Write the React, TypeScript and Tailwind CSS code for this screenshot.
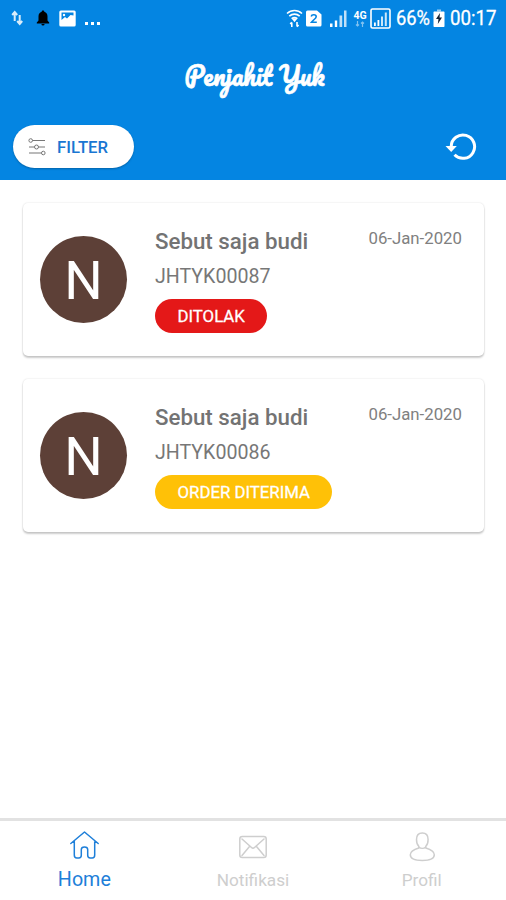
import type { ReactNode } from "react";
import { clsx } from "clsx";

type Order = {
  code: string;
  name: string;
  date: string;
  status: "DITOLAK" | "ORDER DITERIMA";
};

const orders: Order[] = [
  { code: "JHTYK00087", name: "Sebut saja budi", date: "06-Jan-2020", status: "DITOLAK" },
  { code: "JHTYK00086", name: "Sebut saja budi", date: "06-Jan-2020", status: "ORDER DITERIMA" },
];

function StatusBar() {
  return (
    <div className="flex h-9 items-center text-white">
      <svg className="ml-[11px] h-4 w-3 opacity-85" viewBox="0 0 12 16" fill="none" stroke="currentColor" strokeWidth="2">
        <path d="M3.700 11V2.500M1.200 5 3.700 2l2.500 3M8.700 5v8.500M6.200 11l2.500 3 2.500-3" />
      </svg>
      <svg className="ml-[13px] h-4 w-[14px] text-black" viewBox="0 0 14 16" fill="currentColor">
        <path d="M7 .5c.8 0 1.300.5 1.300 1.300 2.200.6 3.200 2.300 3.200 4.700v4l1.700 2v.9H.8v-.9l1.700-2v-4c0-2.400 1-4.100 3.200-4.700C5.700 1 6.200.5 7 .5ZM5.400 14h3.200a1.600 1.600 0 0 1-3.200 0Z" />
      </svg>
      <svg className="ml-[9px] h-[17px] w-[17px]" viewBox="0 0 17 17">
        <rect x=".3" y=".5" width="16.400" height="16" rx="1.500" fill="currentColor" />
        <path d="M2.500 2.500h12v3L11.500 5 8 8.500 6 7l-3.500 3Z" fill="#0485e2" />
        <circle cx="5" cy="5" r="1.200" fill="currentColor" />
      </svg>
      <svg className="ml-[9px] h-[15px] w-4" viewBox="0 0 16 15" fill="currentColor">
        <path d="M0 11h3v3H0zM6 11h3v3H6zM12 11h3v3h-3z" />
      </svg>

      <svg className="ml-auto h-[19px] w-[17px]" viewBox="0 0 17 19" fill="none" stroke="currentColor" strokeWidth="1.600">
        <path d="M1 4.500c4.300-4 10.700-4 15 0M3.300 7.200c3-2.800 7.400-2.800 10.400 0M5.700 9.700c1.700-1.500 3.900-1.500 5.600 0" />
        <path d="M7 10h3l-1.500 2ZM5.800 18v-4.500M4.200 15l1.600-1.700M11 13v4.500M12.600 16 11 17.700" />
      </svg>
      <svg className="ml-[3px] h-[17px] w-4" viewBox="0 0 16 17">
        <path d="M1.500.5H11l4.500 4V15a1.500 1.500 0 0 1-1.500 1.500H1.500A1.500 1.500 0 0 1 0 15V2A1.500 1.500 0 0 1 1.500.5Z" fill="currentColor" />
        <path d="M5.200 6.500c.5-2.500 5-2.300 5 .2 0 1.800-2.700 2.800-4.700 5.500h5.300" fill="none" stroke="#0485e2" strokeWidth="1.600" />
      </svg>
      <svg className="ml-[8px] h-[18px] w-[17px]" viewBox="0 0 17 18" fill="currentColor">
        <path d="M0 14.500h2.500V18H0zM4.800 11.500h2.400V18H4.800z" />
        <path d="M9.500 6.500h2.700V18H9.500zM14 1.500h2.500V18H14z" opacity=".75" />
      </svg>
      <div className="ml-[5px] flex w-4 flex-col items-center font-bold">
        <span className="text-[10.500px] leading-[11px]">4G</span>
        <svg className="h-1.5 w-[10px] opacity-50" viewBox="0 0 10 6" fill="none" stroke="currentColor" strokeWidth="1.200">
          <path d="M2.500 0v5M1 3.500l1.500 1.500L4 3.500M7.500 6V1M6 2.500 7.500 1 9 2.500" />
        </svg>
      </div>
      <svg className="ml-[2px] h-[21px] w-[21px]" viewBox="0 0 21 21" fill="currentColor">
        <rect x="1" y="1" width="19" height="19" rx="1.500" fill="none" stroke="currentColor" strokeWidth="1.600" />
        <path d="M4 14.500h1.800V18H4zM7.500 12h1.800v6H7.500z" />
        <path d="M11 8.500h2V18h-2zM14.800 4.500h2V18h-2z" opacity=".8" />
      </svg>
      <svg className="ml-[5px] h-9 w-[35px]" viewBox="0 0 35 36" fill="currentColor">
        <text x="0" y="25" textLength="34" lengthAdjust="spacingAndGlyphs" className="stroke-white stroke-[0.3px] text-[20.500px]">66%</text>
      </svg>
      <svg className="ml-[2px] h-[18px] w-3" viewBox="0 0 12 18">
        <path d="M4 .5h4v2H4z" fill="currentColor" opacity=".6" />
        <path d="M.5 3.500c0-.6.4-1 1-1h9c.6 0 1 .4 1 1V17c0 .6-.4 1-1 1h-9c-.6 0-1-.4-1-1Z" fill="currentColor" />
        <path d="M7 4 3 10h2.500L4.800 15 9 8.500H6.500Z" fill="#142235" />
      </svg>
      <svg className="mr-[9px] ml-[5px] h-9 w-[47px]" viewBox="0 0 47 36" fill="currentColor">
        <text x="0" y="25" textLength="46.500" lengthAdjust="spacingAndGlyphs" className="stroke-white stroke-[0.3px] text-[20.500px]">00:17</text>
      </svg>
    </div>
  );
}

function FilterIcon() {
  return (
    <svg className="h-[18px] w-[18px] text-[#777]" viewBox="0 0 18 18" fill="none" stroke="currentColor">
      <path d="M4.500 2.500H17M1 9h5.500M10.500 9H17M1 15h12.500" strokeWidth="1.200" />
      <circle cx="2.700" cy="2.500" r="1.800" />
      <circle cx="8.500" cy="9" r="2" />
      <circle cx="15.300" cy="15" r="1.800" />
    </svg>
  );
}

function Header() {
  return (
    <header className="h-[180px] shrink-0 bg-[#0485e2]">
      <StatusBar />
      <div className="flex h-[82px] items-center justify-center">
        <svg className="h-[70px] w-[160px]" viewBox="0 0 160 70">
          <text
            x="11.500"
            y="44"
            textLength="140"
            lengthAdjust="spacingAndGlyphs"
            className="fill-white stroke-white stroke-[0.6px] font-[Pacifico,cursive] text-[25px]"
          >
            Penjahit Yuk
          </text>
        </svg>
      </div>
      <div className="flex items-center justify-between pt-[7px] pr-[29px] pl-[13px]">
        <button className="flex h-[43px] w-[121px] items-center gap-[11px] rounded-full bg-white pl-[15px] text-[16.700px] font-medium text-[#1976d2] shadow-[0_1px_2px_rgba(0,0,0,0.25)]">
          <FilterIcon />
          <span className="pt-0.5">FILTER</span>
        </button>
        <svg className="h-[30px] w-8 text-white" viewBox="0 0 32 30">
          <path d="M6.200 14.500A11.700 11.700 0 1 1 9.500 22.800" fill="none" stroke="currentColor" strokeWidth="3" />
          <path d="M.5 14h11.300L6.200 20Z" fill="currentColor" />
        </svg>
      </div>
    </header>
  );
}

function OrderCard({ order }: { order: Order }) {
  const rejected = order.status === "DITOLAK";

  return (
    <article className="flex h-[153px] rounded-[5px] bg-white pr-[22px] pl-[17px] shadow-[0_2px_2px_rgba(0,0,0,0.2),0_0_2px_rgba(0,0,0,0.14)]">
      <div className="mt-[33px] flex size-[87px] items-center justify-center rounded-full bg-[#5d4037] pt-px text-[54px] text-white">
        N
      </div>
      <div className="ml-7 flex flex-col items-start pt-[25px] text-[#777]">
        <h2 className="text-[22.300px] leading-[27px] font-medium whitespace-nowrap text-[#737373]">{order.name}</h2>
        <p className="mt-[10px] text-[19.600px] leading-6">{order.code}</p>
        <span
          className={clsx(
            "mt-[10px] flex h-[34px] items-center rounded-full px-[22.500px] pt-px text-[16.800px] whitespace-nowrap text-white [-webkit-text-stroke:0.3px_white]",
            rejected ? "bg-[#e41818]" : "bg-[#ffc107]"
          )}
        >
          {order.status}
        </span>
      </div>
      <time className="ml-auto pt-[23px] text-[16.800px] leading-6 whitespace-nowrap text-[#808080]">{order.date}</time>
    </article>
  );
}

function NavItem({ label, active, children }: { label: string; active?: boolean; children: ReactNode }) {
  return (
    <a className={clsx("flex flex-1 flex-col items-center pt-[9px]", active ? "text-[#1e7fd9]" : "text-[#cecece]")}>
      <svg className="h-[34px] w-8" viewBox="0 0 32 34" fill="none" stroke="currentColor" strokeWidth="1.500" strokeLinecap="round" strokeLinejoin="round">
        {children}
      </svg>
      <span className={active ? "mt-1 text-[19.700px] leading-6" : "mt-1 text-[17.200px] leading-6"}>{label}</span>
    </a>
  );
}

function BottomNav() {
  return (
    <nav className="flex h-[82px] border-t-[3px] border-[#e2e2e2] bg-white">
      <NavItem label="Home" active>
        <path d="M2.800 13.500 16.500 2 30.200 13.500M6.300 11.500V25c0 2 .8 3 2.500 3h2c1.700 0 2.500-1 2.500-2.700v-5.800c0-3.500 6.400-3.500 6.400 0v5.800c0 1.700.8 2.700 2.500 2.700h2c1.700 0 2.500-1 2.500-3V11.500" />
      </NavItem>
      <NavItem label="Notifikasi">
        <rect x="2.800" y="6.500" width="26.400" height="21" rx="2.500" />
        <path d="m5 9 9.500 8.500c1 .9 2 .9 3 0L27 9M5 25.500l7.500-9M27 25.500l-7.500-9" />
      </NavItem>
      <NavItem label="Profil">
        <path d="M16.300 3c-3.500 0-5.800 2.400-5.800 6.500 0 3.300 1 5.600 2.300 6.800V18c-4.800 1.400-8.500 3-8.500 6.800 0 4 5.500 5.700 12 5.700s12-1.700 12-5.700c0-3.800-3.700-5.400-8.500-6.800v-1.700c1.300-1.200 2.300-3.500 2.300-6.800 0-4.100-2.300-6.500-5.800-6.500ZM12.800 17c2 1.800 5 1.800 7 0" />
      </NavItem>
    </nav>
  );
}

export default function App() {
  return (
    <div className="flex h-[900px] w-[506px] flex-col overflow-hidden bg-white font-[Roboto,sans-serif]">
      <Header />
      <main className="flex flex-1 flex-col gap-[23px] pt-[23px] pr-[22px] pl-[23px]">
        {orders.map((order) => (
          <OrderCard key={order.code} order={order} />
        ))}
      </main>
      <BottomNav />
    </div>
  );
}
